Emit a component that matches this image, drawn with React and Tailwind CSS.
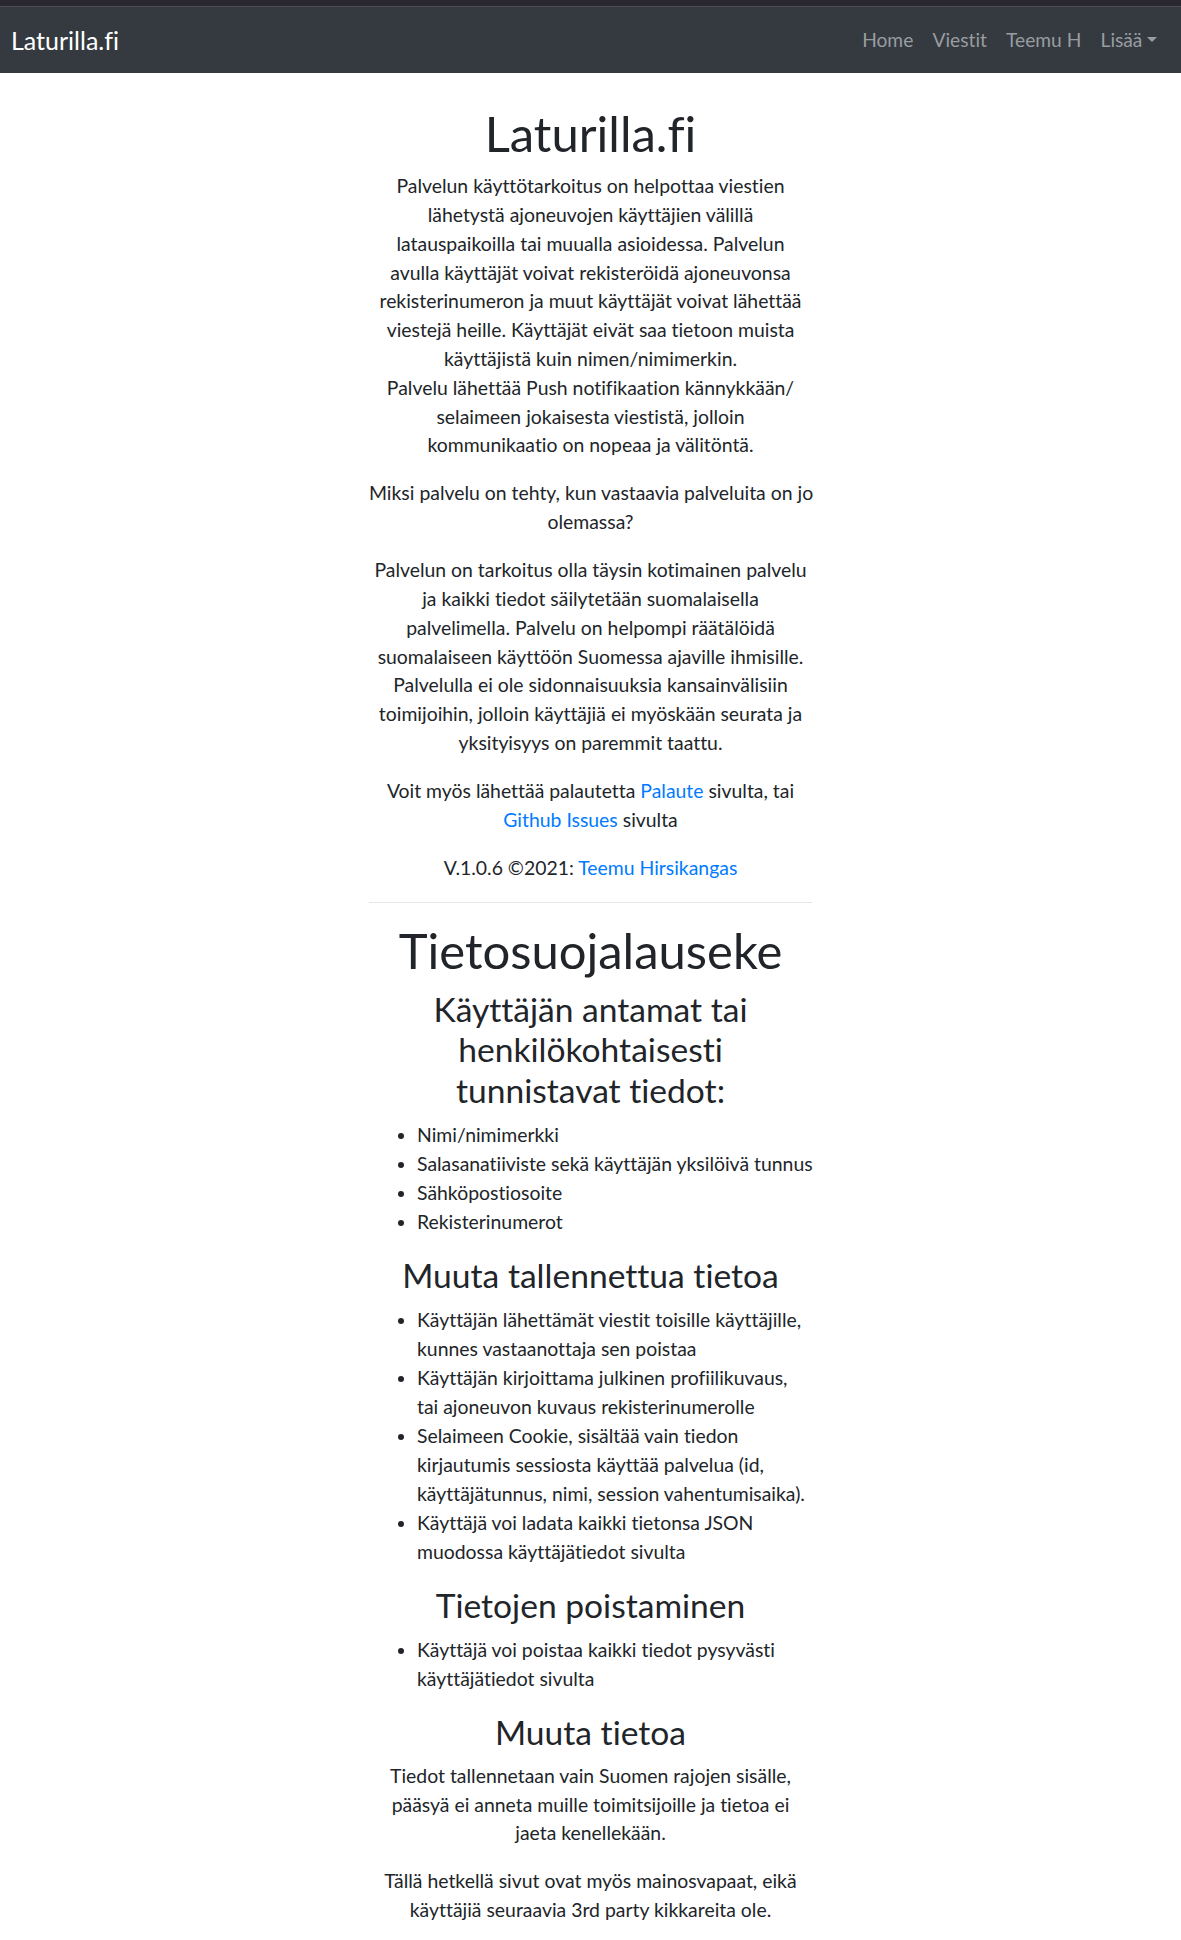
import React from "react";

const font = "font-['Lato','Noto_Sans',sans-serif] [font-variant-ligatures:none]";

const Lines = ({ lines }) =>
  lines.map((line, i) => (
    <span key={i} className="block whitespace-nowrap">
      {line}
    </span>
  ));

const NavBar = () => (
  <div>
    <div className="h-[7px] bg-[#29272f] border-b border-[#4d4c53]" />
    <nav className="h-[66px] bg-[#343a40] flex items-center justify-between pl-[11px] pr-[14px]">
      <div className="text-white text-[25px] leading-[36px]">Laturilla.fi</div>
      <ul className="flex items-center text-[19.2px] leading-[28.8px] text-[#9a9da0]">
        <li className="px-[9.6px]">Home</li>
        <li className="px-[9.6px]">Viestit</li>
        <li className="px-[9.6px]">Teemu H</li>
        <li className="px-[9.6px] flex items-center">
          Lisää
          <span className="ml-[5px] inline-block w-0 h-0 border-t-[5.8px] border-t-[#9a9da0] border-x-[5.8px] border-x-transparent" />
        </li>
      </ul>
    </nav>
  </div>
);

const Para = ({ children }) => (
  <p className="mb-[19.2px]">{children}</p>
);

const Sub = ({ lines }) => (
  <h3 className="text-[33.6px] leading-[40.3px] mb-[9.6px] font-normal">
    <Lines lines={lines} />
  </h3>
);

const Bullets = ({ items }) => (
  <ul className="list-disc pl-[48px] mb-[19.2px] text-left leading-[29px]">
    {items.map((lines, i) => (
      <li key={i}>
        {lines.map((l, j) => (
          <span key={j} className="block whitespace-nowrap">
            {l}
          </span>
        ))}
      </li>
    ))}
  </ul>
);

const A = ({ children }) => <a className="text-[#007bff]">{children}</a>;

export default function App() {
  return (
    <div className={`${font} bg-white min-h-[1940px] text-[#212529]`}>
      <NavBar />
      <main className="w-[443px] mx-auto pt-[32px] text-center text-[19.4px] leading-[28.8px]">
        <h1 className="text-[49px] leading-[57.6px] mb-[9.6px] font-normal">Laturilla.fi</h1>
        <Para>
          <Lines
            lines={[
              "Palvelun käyttötarkoitus on helpottaa viestien",
              "lähetystä ajoneuvojen käyttäjien välillä",
              "latauspaikoilla tai muualla asioidessa. Palvelun",
              "avulla käyttäjät voivat rekisteröidä ajoneuvonsa",
              "rekisterinumeron ja muut käyttäjät voivat lähettää",
              "viestejä heille. Käyttäjät eivät saa tietoon muista",
              "käyttäjistä kuin nimen/nimimerkin.",
              "Palvelu lähettää Push notifikaation kännykkään/",
              "selaimeen jokaisesta viestistä, jolloin",
              "kommunikaatio on nopeaa ja välitöntä.",
            ]}
          />
        </Para>
        <Para>
          <Lines lines={["Miksi palvelu on tehty, kun vastaavia palveluita on jo", "olemassa?"]} />
        </Para>
        <Para>
          <Lines
            lines={[
              "Palvelun on tarkoitus olla täysin kotimainen palvelu",
              "ja kaikki tiedot säilytetään suomalaisella",
              "palvelimella. Palvelu on helpompi räätälöidä",
              "suomalaiseen käyttöön Suomessa ajaville ihmisille.",
              "Palvelulla ei ole sidonnaisuuksia kansainvälisiin",
              "toimijoihin, jolloin käyttäjiä ei myöskään seurata ja",
              "yksityisyys on paremmit taattu.",
            ]}
          />
        </Para>
        <Para>
          <span className="block whitespace-nowrap">
            Voit myös lähettää palautetta <A>Palaute</A> sivulta, tai
          </span>
          <span className="block whitespace-nowrap">
            <A>Github Issues</A> sivulta
          </span>
        </Para>
        <Para>
          V.1.0.6 ©2021: <A>Teemu Hirsikangas</A>
        </Para>
        <hr className="border-0 border-t border-[#e6e6e6] mb-[19.2px]" />
        <h1 className="text-[49px] leading-[57.6px] mb-[9.6px] font-normal">Tietosuojalauseke</h1>
        <Sub lines={["Käyttäjän antamat tai", "henkilökohtaisesti", "tunnistavat tiedot:"]} />
        <Bullets
          items={[
            ["Nimi/nimimerkki"],
            ["Salasanatiiviste sekä käyttäjän yksilöivä tunnus"],
            ["Sähköpostiosoite"],
            ["Rekisterinumerot"],
          ]}
        />
        <Sub lines={["Muuta tallennettua tietoa"]} />
        <Bullets
          items={[
            ["Käyttäjän lähettämät viestit toisille käyttäjille,", "kunnes vastaanottaja sen poistaa"],
            ["Käyttäjän kirjoittama julkinen profiilikuvaus,", "tai ajoneuvon kuvaus rekisterinumerolle"],
            [
              "Selaimeen Cookie, sisältää vain tiedon",
              "kirjautumis sessiosta käyttää palvelua (id,",
              "käyttäjätunnus, nimi, session vahentumisaika).",
            ],
            ["Käyttäjä voi ladata kaikki tietonsa JSON", "muodossa käyttäjätiedot sivulta"],
          ]}
        />
        <Sub lines={["Tietojen poistaminen"]} />
        <Bullets items={[["Käyttäjä voi poistaa kaikki tiedot pysyvästi", "käyttäjätiedot sivulta"]]} />
        <Sub lines={["Muuta tietoa"]} />
        <Para>
          <Lines
            lines={[
              "Tiedot tallennetaan vain Suomen rajojen sisälle,",
              "pääsyä ei anneta muille toimitsijoille ja tietoa ei",
              "jaeta kenellekään.",
            ]}
          />
        </Para>
        <Para>
          <Lines
            lines={[
              "Tällä hetkellä sivut ovat myös mainosvapaat, eikä",
              "käyttäjiä seuraavia 3rd party kikkareita ole.",
            ]}
          />
        </Para>
      </main>
    </div>
  );
}
